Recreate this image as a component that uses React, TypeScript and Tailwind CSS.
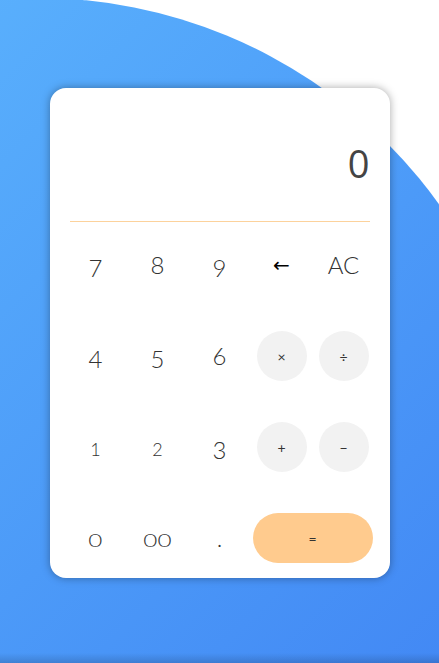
import React from "react";

type Key = { label: string; kind: "num" | "op" | "eq" | "plain" };

const keys: Key[] = [
  { label: "7", kind: "num" },
  { label: "8", kind: "num" },
  { label: "9", kind: "num" },
  { label: "←", kind: "plain" },
  { label: "AC", kind: "num" },
  { label: "4", kind: "num" },
  { label: "5", kind: "num" },
  { label: "6", kind: "num" },
  { label: "×", kind: "op" },
  { label: "÷", kind: "op" },
  { label: "1", kind: "num" },
  { label: "2", kind: "num" },
  { label: "3", kind: "num" },
  { label: "+", kind: "op" },
  { label: "−", kind: "op" },
  { label: "0", kind: "num" },
  { label: "00", kind: "num" },
  { label: ".", kind: "num" },
  { label: "=", kind: "eq" },
];

// old-style figures: small ones sit on the x-height, some drop below the line
const small = ["1", "2"];
const round = ["0", "00"];
const drop = ["3", "4", "5", "7", "9"];

function CalcKey({ k }: { k: Key }) {
  if (k.kind === "eq") {
    return (
      <button className="col-span-2 -mx-1 h-[50px] rounded-full bg-[#ffcb8e] text-[14px] text-[#333] flex items-center justify-center">
        {k.label}
      </button>
    );
  }
  if (k.kind === "op") {
    return (
      <button className="w-[50px] h-[50px] rounded-full bg-[#f2f2f2] text-[14px] text-[#333] flex items-center justify-center">
        {k.label}
      </button>
    );
  }
  if (k.kind === "plain") {
    return (
      <button className="w-[50px] h-[50px] text-[20px] text-black flex items-center justify-center font-['DejaVu_Sans',sans-serif]">
        {k.label}
      </button>
    );
  }
  let size = "text-[24px]";
  if (small.includes(k.label)) size = "text-[18px] translate-y-[2px]";
  if (round.includes(k.label)) size = "text-[18px] translate-y-[2px] scale-x-[1.35]";
  if (drop.includes(k.label)) size = "text-[24px] translate-y-[3px]";
  return (
    <button className="w-[50px] h-[50px] leading-[50px] text-center text-[#333] font-light">
      <span className={"inline-block " + size}>{k.label}</span>
    </button>
  );
}

export default function App() {
  return (
    <div className="relative min-h-screen h-[663px] w-full overflow-hidden bg-white font-['Lato',sans-serif]">
      <div className="absolute left-[-455px] top-[-2px] w-[986px] h-[986px] rounded-full bg-linear-to-br from-[#63beff] to-[#3c7af1]" />
      <div className="absolute bottom-0 left-0 right-0 h-[10px] bg-linear-to-b from-transparent to-black/15" />

      <div className="relative flex justify-center pt-[88px]">
        <div className="w-[340px] h-[490px] bg-white rounded-2xl shadow-[0_0_8px_rgba(0,0,0,0.35)] px-5 pb-4">
          <div className="h-[133px] flex items-end justify-end pb-[39px]">
            <span className="text-[38px] leading-none text-[#444] font-['Open_Sans',sans-serif]">0</span>
          </div>
          <div className="h-px bg-[#fcd29c]" />
          <div className="mt-[18px] grid grid-cols-[repeat(5,50px)] justify-center gap-x-3 gap-y-[41px]">
            {keys.map((k) => (
              <CalcKey key={k.label} k={k} />
            ))}
          </div>
        </div>
      </div>
    </div>
  );
}
